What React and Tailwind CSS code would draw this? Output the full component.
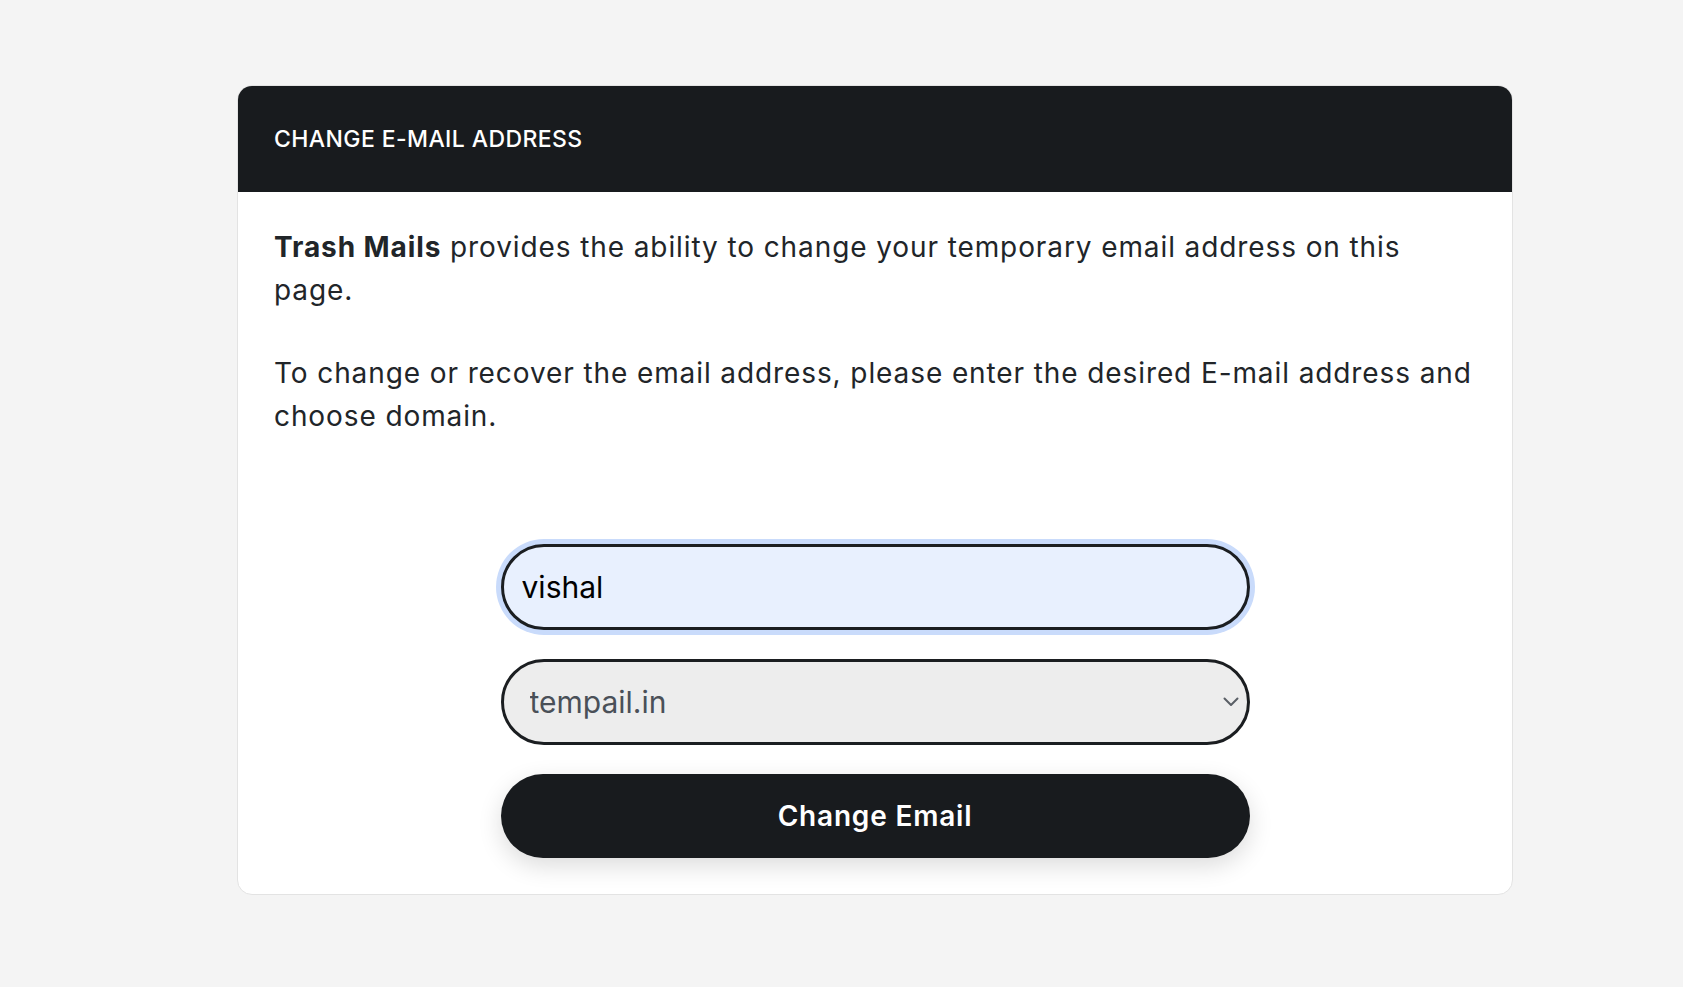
import React, { useState } from 'react';

const ChevronDown = () => (
  <svg width="16" height="10" viewBox="0 0 16 10" fill="none" className="pointer-events-none">
    <path d="M1.5 1.5 L8 8 L14.5 1.5" stroke="#5a5f66" strokeWidth="2" strokeLinecap="round" strokeLinejoin="round" />
  </svg>
);

const App = () => {
  const [name, setName] = useState('vishal');
  const [domain, setDomain] = useState('tempail.in');

  return (
    <div className="min-h-screen bg-[#f4f4f4] pt-[85px] pb-24 font-['Inter','Noto_Sans',sans-serif]">
      <div className="ml-[237px] w-[1276px] bg-white rounded-[15px] border border-[#e3e3e3] overflow-hidden">
        {/* Header */}
        <div className="h-[106px] bg-[#181b1e] px-9 flex items-center">
          <h1 className="text-white text-[23px] font-medium tracking-[0.4px]">CHANGE E-MAIL ADDRESS</h1>
        </div>

        {/* Body */}
        <div className="px-9 pt-[34px] pb-9 text-[#212529]">
          <p className="text-[28px] leading-[43px] tracking-[0.9px]">
            <strong className="font-bold">Trash Mails</strong> provides the ability to change your temporary email address on this page.
          </p>
          <p className="text-[28px] leading-[43px] tracking-[0.9px] mt-10">
            To change or recover the email address, please enter the desired E-mail address and choose domain.
          </p>

          <form onSubmit={(e) => e.preventDefault()} className="mt-[106px] w-[749px] mx-auto flex flex-col gap-[29px]">
            <input
              type="text"
              autoFocus
              value={name}
              onChange={(e) => setName(e.target.value)}
              className="h-[86px] w-full rounded-full border-[3px] border-[#1b1e21] bg-[#e8f0fe] pl-[18px] pr-6 text-[30px] text-black caret-black outline-none ring-[5px] ring-[#c9dbfb]"
            />
            <div className="relative">
              <select
                value={domain}
                onChange={(e) => setDomain(e.target.value)}
                className="h-[86px] w-full appearance-none rounded-full border-[3px] border-[#1b1e21] bg-[#ededed] pl-[26px] pr-12 text-[30px] text-[#4a5058] outline-none"
              >
                <option>tempail.in</option>
                <option>trashmails.in</option>
                <option>tempmail.cc</option>
              </select>
              <div className="absolute right-[11px] top-1/2 -translate-y-1/2">
                <ChevronDown />
              </div>
            </div>
            <button
              type="submit"
              className="h-[84px] w-full rounded-full bg-[#181b1e] text-white text-[28px] font-semibold tracking-[0.8px] shadow-[0_8px_24px_rgba(0,0,0,0.14)]"
            >
              Change Email
            </button>
          </form>
        </div>
      </div>
    </div>
  );
};

export default App;
